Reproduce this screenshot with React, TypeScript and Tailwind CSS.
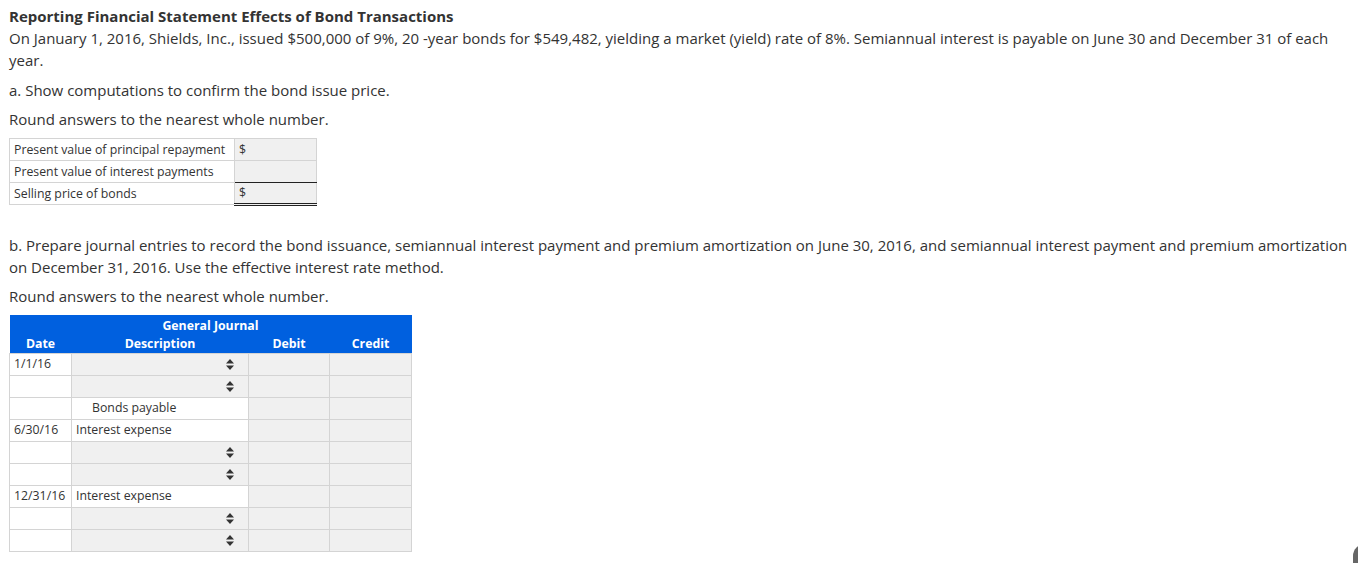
import React from "react";

const Arrows = () => (
  <svg width="8" height="11" viewBox="0 0 8 11" className="block">
    <path d="M4 0 L8 4.5 L0 4.5 Z" fill="#333" />
    <path d="M4 11 L8 6.5 L0 6.5 Z" fill="#333" />
  </svg>
);

type Row = { date?: string; desc?: string; select?: boolean; indent?: boolean };

const rows: Row[] = [
  { date: "1/1/16", select: true },
  { select: true },
  { desc: "Bonds payable", indent: true },
  { date: "6/30/16", desc: "Interest expense" },
  { select: true },
  { select: true },
  { date: "12/31/16", desc: "Interest expense" },
  { select: true },
  { select: true },
];

export default function App() {
  return (
    <div
      className="relative w-[1358px] h-[563px] overflow-hidden bg-white text-[#333] pl-[9px] pr-[8px] pt-[5px]"
      style={{ fontFamily: '"Open Sans", "Liberation Sans", sans-serif' }}
    >
      <div className="text-[15px] font-bold leading-[22px]">Reporting Financial Statement Effects of Bond Transactions</div>
      <p className="text-[15px] leading-[22px]">
        On January 1, 2016, Shields, Inc., issued $500,000 of 9%, 20 -year bonds for $549,482, yielding a market (yield) rate of 8%. Semiannual interest is payable on June 30 and December 31 of each year.
      </p>
      <p className="text-[15px] leading-[22px] mt-[8px]">a. Show computations to confirm the bond issue price.</p>
      <p className="text-[15px] leading-[22px] mt-[7px]">Round answers to the nearest whole number.</p>

      <table className="mt-[8px] border-collapse text-[12.3px] leading-[20px]">
        <tbody>
          <tr>
            <td className="border border-[#d4d4d4] w-[225px] h-[22px] px-[4px]">Present value of principal repayment</td>
            <td className="border border-[#d4d4d4] bg-[#f0f0f0] w-[82px] px-[4px]">$</td>
          </tr>
          <tr>
            <td className="border border-[#d4d4d4] h-[22px] px-[4px]">Present value of interest payments</td>
            <td className="border border-[#d4d4d4] border-b-[#222] bg-[#f0f0f0]"></td>
          </tr>
          <tr>
            <td className="border border-[#d4d4d4] h-[22px] px-[4px]">Selling price of bonds</td>
            <td className="border-x border-[#d4d4d4] border-b-[3px] border-b-[#222] bg-[#f0f0f0] px-[4px]" style={{ borderBottomStyle: "double", borderLeftStyle: "solid", borderRightStyle: "solid" }}>$</td>
          </tr>
        </tbody>
      </table>

      <p className="text-[15px] leading-[22px] mt-[28px]">
        b. Prepare journal entries to record the bond issuance, semiannual interest payment and premium amortization on June 30, 2016, and semiannual interest payment and premium amortization on December 31, 2016. Use the effective interest rate method.
      </p>
      <p className="text-[15px] leading-[22px] mt-[7px]">Round answers to the nearest whole number.</p>

      <table className="mt-[8px] border-collapse text-[12.3px] leading-[20px]">
        <thead>
          <tr className="bg-[#0060df] text-white font-bold">
            <th colSpan={4} className="h-[19px] pt-[1px] leading-[17px] text-center">General Journal</th>
          </tr>
          <tr className="bg-[#0060df] text-white font-bold">
            <th className="w-[62px] h-[19px] leading-[16px] pt-[2px] text-center">Date</th>
            <th className="w-[177px] leading-[16px] pt-[2px] text-center">Description</th>
            <th className="w-[81px] leading-[16px] pt-[2px] text-center">Debit</th>
            <th className="w-[82px] leading-[16px] pt-[2px] text-center">Credit</th>
          </tr>
        </thead>
        <tbody>
          {rows.map((r, i) => (
            <tr key={i}>
              <td className="border border-[#d4d4d4] h-[22px] px-[4px] bg-white">{r.date ?? ""}</td>
              {r.select ? (
                <td className="border border-[#d4d4d4] bg-[#f0f0f0] px-[4px]">
                  <div className="flex justify-end pr-[10px]">
                    <Arrows />
                  </div>
                </td>
              ) : (
                <td className={`border border-[#d4d4d4] bg-white ${r.indent ? "pl-[20px]" : "pl-[4px]"}`}>{r.desc}</td>
              )}
              <td className="border border-[#d4d4d4] bg-[#f0f0f0]"></td>
              <td className="border border-[#d4d4d4] bg-[#f0f0f0]"></td>
            </tr>
          ))}
        </tbody>
      </table>

      <div className="absolute left-[1353px] top-[544px] w-[12px] h-[30px] rounded-tl-[12px] bg-[#666]"></div>
    </div>
  );
}
